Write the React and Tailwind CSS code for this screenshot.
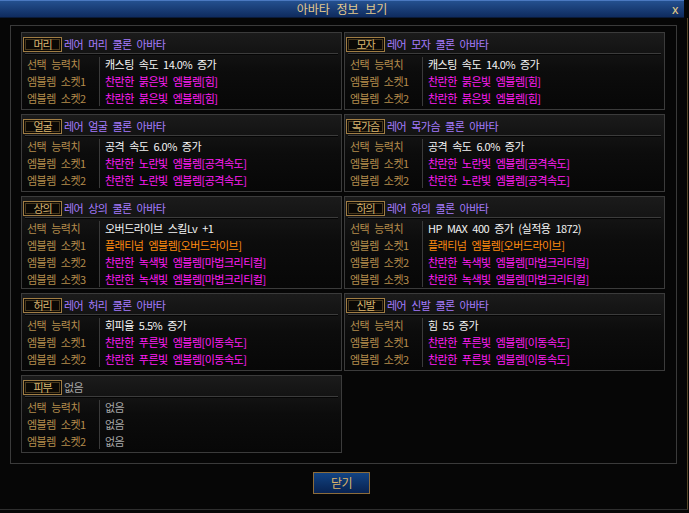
import React from 'react';

const WHITE = 'text-[#f4f4f4]';
const PINK = 'text-[#ff1cf4]';
const ORANGE = 'text-[#ff8a10]';
const GRAY = 'text-[#a8a8a8]';

const panels = [
  {
    tag: '머리',
    title: '레어 머리 쿨론 아바타',
    rows: [
      ['선택 능력치', '캐스팅 속도 14.0% 증가', WHITE],
      ['엠블렘 소켓1', '찬란한 붉은빛 엠블렘[힘]', PINK],
      ['엠블렘 소켓2', '찬란한 붉은빛 엠블렘[힘]', PINK],
    ],
  },
  {
    tag: '모자',
    title: '레어 모자 쿨론 아바타',
    rows: [
      ['선택 능력치', '캐스팅 속도 14.0% 증가', WHITE],
      ['엠블렘 소켓1', '찬란한 붉은빛 엠블렘[힘]', PINK],
      ['엠블렘 소켓2', '찬란한 붉은빛 엠블렘[힘]', PINK],
    ],
  },
  {
    tag: '얼굴',
    title: '레어 얼굴 쿨론 아바타',
    rows: [
      ['선택 능력치', '공격 속도 6.0% 증가', WHITE],
      ['엠블렘 소켓1', '찬란한 노란빛 엠블렘[공격속도]', PINK],
      ['엠블렘 소켓2', '찬란한 노란빛 엠블렘[공격속도]', PINK],
    ],
  },
  {
    tag: '목가슴',
    title: '레어 목가슴 쿨론 아바타',
    rows: [
      ['선택 능력치', '공격 속도 6.0% 증가', WHITE],
      ['엠블렘 소켓1', '찬란한 노란빛 엠블렘[공격속도]', PINK],
      ['엠블렘 소켓2', '찬란한 노란빛 엠블렘[공격속도]', PINK],
    ],
  },
  {
    tag: '상의',
    title: '레어 상의 쿨론 아바타',
    tall: true,
    rows: [
      ['선택 능력치', '오버드라이브 스킬Lv +1', WHITE],
      ['엠블렘 소켓1', '플래티넘 엠블렘[오버드라이브]', ORANGE],
      ['엠블렘 소켓2', '찬란한 녹색빛 엠블렘[마법크리티컬]', PINK],
      ['엠블렘 소켓3', '찬란한 녹색빛 엠블렘[마법크리티컬]', PINK],
    ],
  },
  {
    tag: '하의',
    title: '레어 하의 쿨론 아바타',
    tall: true,
    rows: [
      ['선택 능력치', 'HP MAX 400 증가 (실적용 1872)', WHITE],
      ['엠블렘 소켓1', '플래티넘 엠블렘[오버드라이브]', ORANGE],
      ['엠블렘 소켓2', '찬란한 녹색빛 엠블렘[마법크리티컬]', PINK],
      ['엠블렘 소켓3', '찬란한 녹색빛 엠블렘[마법크리티컬]', PINK],
    ],
  },
  {
    tag: '허리',
    title: '레어 허리 쿨론 아바타',
    rows: [
      ['선택 능력치', '회피율 5.5% 증가', WHITE],
      ['엠블렘 소켓1', '찬란한 푸른빛 엠블렘[이동속도]', PINK],
      ['엠블렘 소켓2', '찬란한 푸른빛 엠블렘[이동속도]', PINK],
    ],
  },
  {
    tag: '신발',
    title: '레어 신발 쿨론 아바타',
    rows: [
      ['선택 능력치', '힘 55 증가', WHITE],
      ['엠블렘 소켓1', '찬란한 푸른빛 엠블렘[이동속도]', PINK],
      ['엠블렘 소켓2', '찬란한 푸른빛 엠블렘[이동속도]', PINK],
    ],
  },
  {
    tag: '피부',
    title: '없음',
    empty: true,
    rows: [
      ['선택 능력치', '없음', GRAY],
      ['엠블렘 소켓1', '없음', GRAY],
      ['엠블렘 소켓2', '없음', GRAY],
    ],
  },
];

const Tag = ({ label }) => (
  <div className="w-[39px] h-[15px] border border-[#a07d44] p-[1px] bg-[#0a0805]">
    <div className="w-full h-full border border-[#4a3a1e] flex items-center justify-center text-[#d8b470] tracking-[-1px] leading-none">
      {label}
    </div>
  </div>
);

const Panel = ({ p }) => (
  <div
    className={`border border-[#3b3b3b] bg-gradient-to-b from-[#1b1b1b] via-[#0c0c0c] to-[#070707] flex flex-col ${
      p.tall ? 'h-[93px]' : 'h-[78px]'
    }`}
  >
    {/* header */}
    <div className="flex items-center gap-[2px] pl-[1px] pt-[3px] h-[20px]">
      <Tag label={p.tag} />
      <span className={p.empty ? 'text-[#a8a8a8]' : 'text-[#a67cff]'}>{p.title}</span>
    </div>
    <div className="mx-[3px] h-[2px] border-t border-[#3c3c3c] border-b-[#050505] border-b" />

    {/* rows */}
    <div className="flex mt-[1px] ml-[5px]">
      <div className="w-[72px] flex flex-col text-[#b48c4c]">
        {p.rows.map((r) => (
          <div key={r[0]} className="h-[17px] flex items-center">
            {r[0]}
          </div>
        ))}
      </div>
      <div className="w-px bg-[#3a3a3a] my-[1px]" />
      <div className="flex flex-col pl-[5px]">
        {p.rows.map((r, i) => (
          <div key={i} className={`h-[17px] flex items-center whitespace-nowrap ${r[2]}`}>
            {r[1]}
          </div>
        ))}
      </div>
    </div>
  </div>
);

export default function App() {
  return (
    <div
      className="w-[689px] h-[513px] bg-[#060606] flex flex-col overflow-hidden text-[11px] tracking-[-0.5px] [word-spacing:3px]"
      style={{ fontFamily: '"Noto Sans CJK KR", "Noto Sans", sans-serif' }}
    >
      {/* title bar */}
      <div className="w-[684px] h-[18px] shrink-0 border-t border-[#4a78c0] border-b border-b-[#0a1a38] bg-gradient-to-b from-[#24508f] to-[#0f2b5e] flex items-center relative">
        <div className="flex-1 text-center text-[#e2c98e] text-[12px] leading-none tracking-[0px] [word-spacing:4px]">아바타 정보 보기</div>
        <span className="absolute right-[6px] top-[1px] text-[#e2cc8a] text-[13px] leading-none">x</span>
      </div>

      <div className="flex-1 flex flex-col border-r border-[#5a4a2a] border-b border-b-[#2e2e2e] w-[688px] mb-[3px]">
        {/* frame */}
        <div className="ml-[10px] mt-[7px] w-[667px] h-[439px] border border-[#3a3a3a] pl-[10px] pt-[6px]">
          <div className="grid grid-cols-[321px_321px] gap-x-[2px] gap-y-[4px] items-start">
            {panels.map((p) => (
              <Panel key={p.tag} p={p} />
            ))}
          </div>
        </div>

        {/* close button */}
        <div className="flex pl-[313px] mt-[8px]">
          <button className="w-[57px] h-[22px] border border-[#8c6c3a] bg-gradient-to-b from-[#124484] to-[#082250] text-[#dcb46a] text-[12px] leading-none flex items-center justify-center">
            닫기
          </button>
        </div>
      </div>
    </div>
  );
}
